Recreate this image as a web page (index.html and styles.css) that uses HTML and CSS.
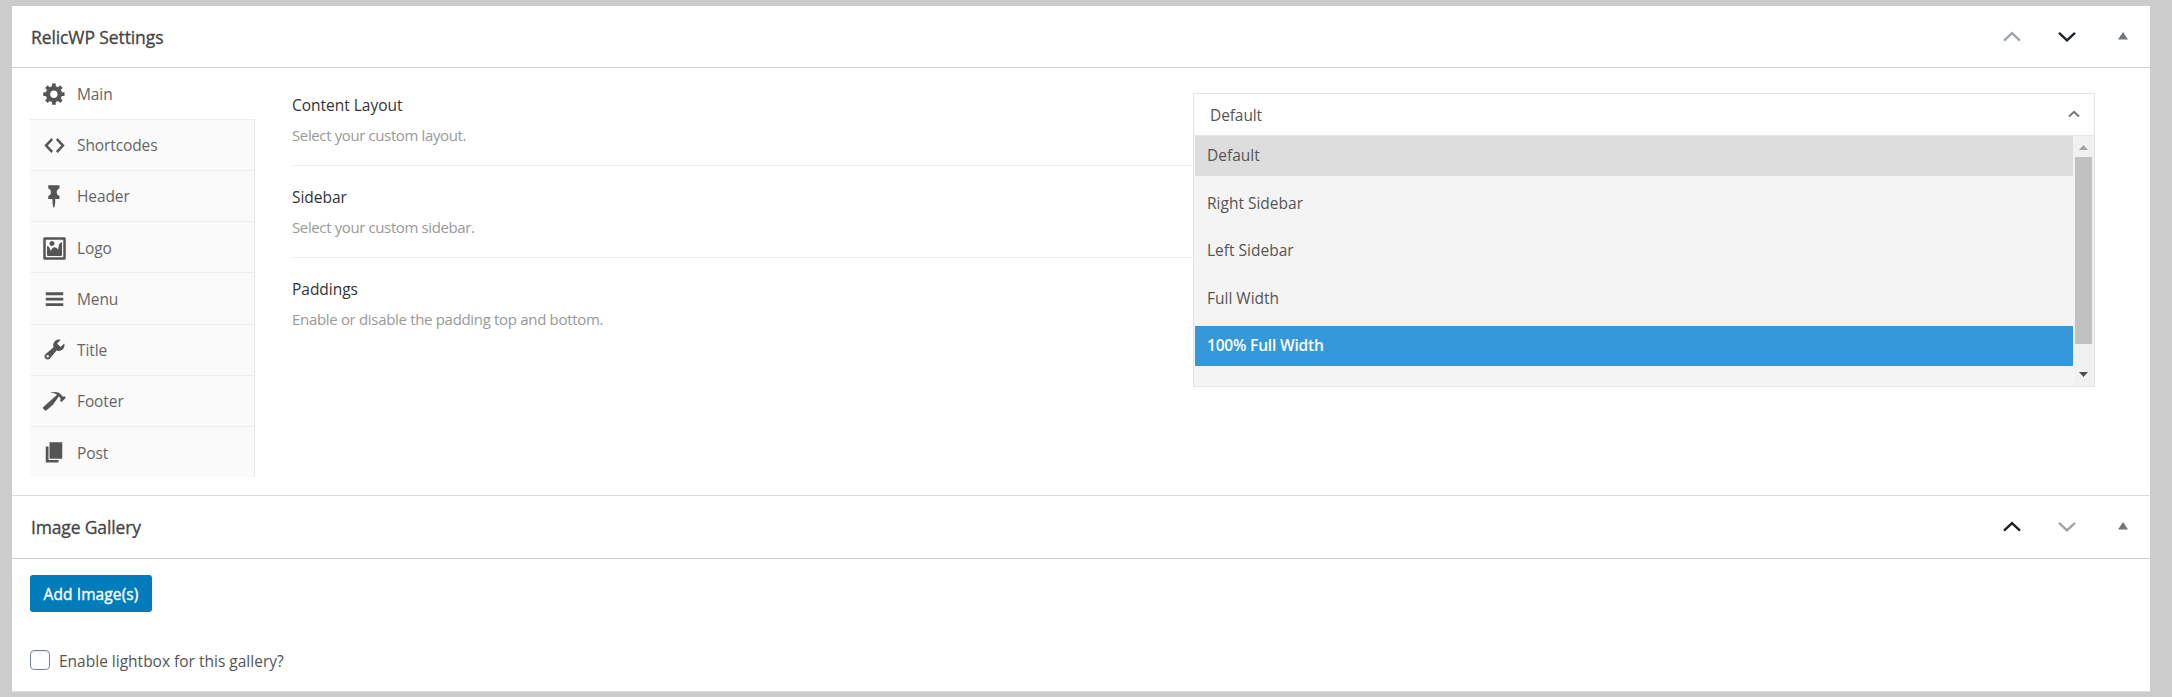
FILE: index.html
```html
<!DOCTYPE html>
<html lang="en">
<head>
<meta charset="utf-8">
<title>RelicWP Settings</title>
<link rel="stylesheet" href="styles.css">
</head>
<body>
<main class="panels">
  <section class="panel settings">
    <header class="panel-head">
      <h2 class="t-settings">RelicWP Settings</h2>
      <div class="actions">
        <svg class="chev dim" viewBox="0 0 20 12"><path d="M2 9.700 10 2.200l8 7.500"/></svg>
        <svg class="chev" viewBox="0 0 20 12"><path d="M2 1.800l8 7.500 8-7.500"/></svg>
        <svg class="tri" viewBox="0 0 10 8"><path d="M5 0l5 7.500H0z"/></svg>
      </div>
    </header>
    <div class="body">
      <nav class="tabs">
        <a class="tab active"><svg viewBox="0 0 20 20"><path d="M18 12h-2.18c-.17.7-.44 1.35-.81 1.93l1.54 1.54-2.1 2.1-1.54-1.54c-.58.36-1.23.63-1.91.79V19H8v-2.18c-.68-.16-1.33-.43-1.91-.79l-1.54 1.54-2.12-2.12 1.54-1.54c-.36-.58-.63-1.23-.79-1.91H1V9.03h2.17c.16-.7.44-1.35.8-1.94L2.43 5.55l2.1-2.1 1.54 1.54c.58-.37 1.24-.64 1.93-.81V2h3v2.18c.68.16 1.33.43 1.91.79l1.54-1.54 2.12 2.12-1.54 1.54c.36.59.64 1.24.8 1.94H18V12zm-8.5 1.5c1.66 0 3-1.34 3-3s-1.34-3-3-3-3 1.34-3 3 1.34 3 3 3z"/></svg><span>Main</span></a>
        <a class="tab"><svg viewBox="0 0 20 20"><path d="M8.8 5.6L4.6 10l4.2 4.4L7.5 16l-5.6-6 5.6-6zM11.2 14.4l4.2-4.4-4.2-4.4L12.500 4l5.6 6-5.600 6z"/></svg><span>Shortcodes</span></a>
        <a class="tab"><svg viewBox="0 0 20 20"><path d="M5 3.61V1.04l8.99-.01-.01 2.58c-1.22.26-2.16 1.35-2.16 2.67v.5c.01 1.31.93 2.4 2.17 2.66l-.01 2.58h-3.41l-.01 2.57c0 .6-.47 4.41-1.06 4.41-.6 0-1.08-3.81-1.08-4.41v-2.56L5 12.02l.01-2.58c1.23-.25 2.15-1.35 2.15-2.66v-.5c0-1.31-.92-2.41-2.16-2.67z"/></svg><span>Header</span></a>
        <a class="tab low"><svg viewBox="0 0 20 20"><path d="M2.25 1h15.5c.69 0 1.25.56 1.25 1.25v15.5c0 .69-.56 1.25-1.25 1.25H2.25C1.56 19 1 18.44 1 17.75V2.25C1 1.56 1.56 1 2.25 1zM17 17V3H3v14h14zM10 6c0-1.1-.9-2-2-2s-2 .9-2 2 .9 2 2 2 2-.9 2-2zm3 5s0-6 3-6v10c0 .55-.45 1-1 1H5c-.55 0-1-.45-1-1V8c2 0 3 4 3 4s1-3 3-3 3 2 3 2z"/></svg><span>Logo</span></a>
        <a class="tab low"><svg viewBox="0 0 20 20"><path d="M3 4.200h14v2.300H3zM3 8.500h14v2.300H3zM3 12.900h14v2.300H3z"/></svg><span>Menu</span></a>
        <a class="tab"><svg viewBox="0 0 20 20"><path d="M16.68 9.77c-1.34 1.34-3.3 1.67-4.95.99l-5.41 6.52c-.99.99-2.59.99-3.58 0s-.99-2.59 0-3.57l6.52-5.42c-.68-1.65-.35-3.61.99-4.95 1.28-1.28 3.12-1.62 4.72-1.06l-2.89 2.89 2.82 2.82 2.86-2.87c.53 1.58.18 3.39-1.08 4.65zM3.81 16.21c.4.39 1.04.39 1.43 0 .4-.4.4-1.04 0-1.43-.39-.4-1.03-.4-1.43 0-.39.39-.39 1.03 0 1.43z"/></svg><span>Title</span></a>
        <a class="tab"><svg viewBox="0 0 20 20"><path d="M17.7 6.32l1.41 1.42-3.47 3.41-1.42-1.42.84-.82c-.32-.76-.81-1.57-1.51-2.31l-4.61 6.59-5.26 4.7c-.39.39-1.02.39-1.42 0l-1.2-1.21c-.39-.39-.39-1.02 0-1.42l10.97-9.92c-1.37-.86-3.21-1.46-5.67-1.48 2.7-.82 4.95-.93 6.58-.3 1.7.66 2.82 2.2 3.91 3.58z"/></svg><span>Footer</span></a>
        <a class="tab low"><svg viewBox="0 0 20 20"><path d="M6 15V1.700h10.200V15zM5.200 16h8v2H3V5.200h2.200z"/></svg><span>Post</span></a>
      </nav>
      <div class="fields">
        <div class="field">
          <div class="label"><h3>Content Layout</h3><p>Select your custom layout.</p></div>
          <div class="select">
            <div class="value"><span>Default</span><svg viewBox="0 0 12 8"><path d="M1 6.500l5-4.700 5 4.700"/></svg></div>
            <div class="dropdown">
              <ul class="options">
                <li class="selected">Default</li>
                <li>Right Sidebar</li>
                <li>Left Sidebar</li>
                <li>Full Width</li>
                <li class="hover">100% Full Width</li>
              </ul>
              <div class="scrollbar">
                <svg class="up" viewBox="0 0 9 5"><path d="M4.500 0L9 5H0z"/></svg>
                <div class="thumb"></div>
                <svg class="down" viewBox="0 0 9 5"><path d="M0 0h9L4.500 5z"/></svg>
              </div>
            </div>
          </div>
        </div>
        <div class="field"><div class="label"><h3>Sidebar</h3><p>Select your custom sidebar.</p></div></div>
        <div class="field"><div class="label"><h3>Paddings</h3><p class="long">Enable or disable the padding top and bottom.</p></div></div>
      </div>
    </div>
  </section>
  <section class="panel gallery">
    <header class="panel-head">
      <h2 class="t-gallery">Image Gallery</h2>
      <div class="actions">
        <svg class="chev" viewBox="0 0 20 12"><path d="M2 9.700 10 2.200l8 7.500"/></svg>
        <svg class="chev dim" viewBox="0 0 20 12"><path d="M2 1.800l8 7.500 8-7.500"/></svg>
        <svg class="tri" viewBox="0 0 10 8"><path d="M5 0l5 7.500H0z"/></svg>
      </div>
    </header>
    <div class="gallery-body">
      <button class="add">Add Image(s)</button>
      <label class="check"><i class="box"></i><span>Enable lightbox for this gallery?</span></label>
    </div>
  </section>
</main>
</body>
</html>
```
FILE: styles.css
```css
* { box-sizing: border-box; }
body {
  margin: 0;
  height: 697px;
  overflow: hidden;
  padding: 6px 22px 0 12px;
  background: #ccc;
  color: #555;
  font: 15.500px/22px "Open Sans", "Noto Sans", sans-serif;
}
h2, h3, p, ul { margin: 0; padding: 0; font-weight: 400; }
.panels { height: 686px; background: #fff; border-bottom: 1px solid #ddd; }
.settings { height: 489px; }
.panel-head {
  display: flex;
  align-items: center;
  justify-content: space-between;
  height: 62px;
  padding: 0 22px 0 19px;
  border-bottom: 1px solid #ccd0d4;
}
.gallery .panel-head { height: 64px; border-top: 1px solid #dcdcde; }
.panel-head h2 { font-size: 17.500px; font-weight: 500; color: #444; -webkit-text-stroke: .3px #444; }
.t-settings { letter-spacing: -.1px; }
.t-gallery { letter-spacing: -.15px; }
.actions { display: flex; align-items: center; }
.chev { width: 20px; height: 12px; margin-right: 35px; fill: none; stroke: #1d2327; stroke-width: 2.500; }
.chev.dim { stroke: #a0a5aa; }
.chev + .tri { margin-left: 6px; }
.tri { width: 10px; height: 8px; margin-bottom: 2px; fill: #72777c; }

.body { display: flex; }
.tabs { width: 225px; margin-left: 18px; }
.tab {
  display: flex;
  align-items: center;
  height: 51.120px;
  padding: 0 0 0 12px;
  border-top: 1px solid #eee;
  border-right: 1px solid #e8e8e8;
  background: #fafafa;
}
.tab.low { padding-top: 2px; }
.tab.active { background: #fff; border-color: transparent; }
.tab.active svg { margin-bottom: 1px; }
.tab svg { width: 25px; height: 25px; margin-right: 10px; fill: #555; }
.tab span { letter-spacing: -.1px; color: #666; }

.fields { width: 1803px; margin-left: 37px; padding-top: 6px; }
.field { display: flex; height: 92px; border-bottom: 1px solid #eee; }
.field:last-child { border-bottom: 0; }
.label { width: 901px; padding-top: 20px; }
.label h3 { color: #333; font-size: 15.500px; line-height: 22px; letter-spacing: -.02px; }
.label p { margin-top: 8px; color: #999; font-size: 15px; letter-spacing: -.38px; }
.label .long { letter-spacing: -.32px; }
.select { width: 902px; height: 294px; margin-top: 19px; border: 1px solid #e5e5e5; background: #fff; position: relative; z-index: 1; }
.value { display: flex; align-items: center; justify-content: space-between; height: 42px; padding: 0 14px 0 16px; border-bottom: 1px solid #e5e5e5; letter-spacing: -.1px; }
.value svg { width: 12px; height: 8px; margin-bottom: 2px; fill: none; stroke: #777; stroke-width: 2; }
.dropdown { display: flex; height: 250px; padding-left: 1px; background: #f4f4f4; }
.options { display: grid; grid-auto-rows: 40px; row-gap: 7.500px; align-content: start; width: 878px; list-style: none; letter-spacing: 0; }
.options li { padding-left: 12px; line-height: 38px; }
.selected { background: #ddd; }
.hover { background: #3498db; color: #fff; font-weight: 600; letter-spacing: -.18px; }
.scrollbar { display: flex; flex-direction: column; width: 21px; padding: 9px 0 9px 2px; background: #f1f1f1; }
.scrollbar svg { width: 9px; height: 5px; margin-left: 4px; }
.up { fill: #a3a3a3; }
.down { fill: #505050; margin-top: auto; }
.thumb { width: 17px; height: 187px; margin-top: 7px; background: #c1c1c1; }

.gallery-body { display: flex; flex-direction: column; align-items: flex-start; padding: 16px 18px; }
.add { width: 122px; height: 37px; padding: 1px 0 0; border: 0; border-radius: 3px; background: #007cba; color: #fff; font: 500 15.500px/36px "Open Sans", sans-serif; letter-spacing: .1px; -webkit-text-stroke: .35px #fff; }
.check { display: flex; align-items: center; height: 22px; margin-top: 38px; }
.box { width: 20px; height: 20px; margin: 0 9px 2px 0; border: 1px solid #7e8993; border-radius: 4px; box-shadow: inset 0 1px 2px rgba(0, 0, 0, .1); }
.check span { letter-spacing: 0; line-height: 22px; }
```
